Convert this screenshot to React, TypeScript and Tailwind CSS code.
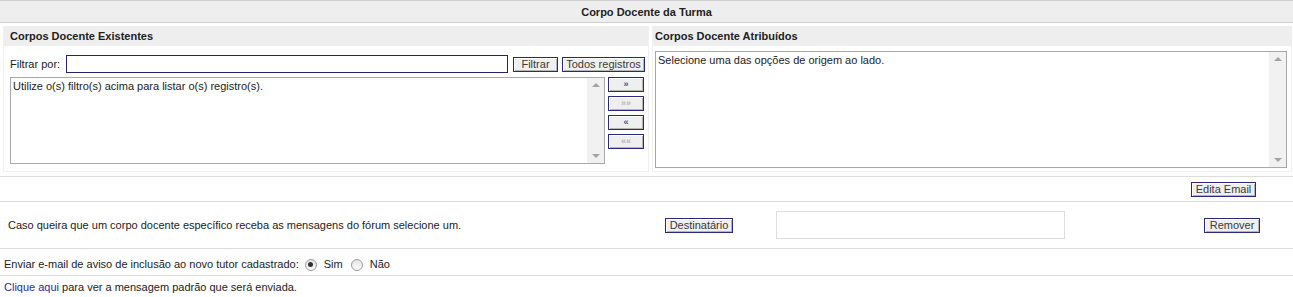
const btn =
  "h-[15px] flex items-center justify-center whitespace-nowrap bg-[#efefef] border border-[#2a2a7a] shadow-[inset_1px_1px_0_#fff,inset_-1px_-1px_0_#b5b5b5] text-[11px] leading-none text-[#3a3a3a] font-['Liberation_Sans',sans-serif]";

const moveButtons = [
  { label: "»", enabled: true },
  { label: "»»", enabled: false },
  { label: "«", enabled: true },
  { label: "««", enabled: false },
];

const ListBox = ({ text, className }: { text: string; className: string }) => (
  <div className={`flex border border-[#a8a8a8] bg-white ${className}`}>
    <div className="flex-1 px-[2px] pt-[1px] leading-[14px]">{text}</div>
    <div className="w-[17px] bg-[#f1f1f1] flex flex-col items-center justify-between py-[5px]">
      <span className="w-0 h-0 border-x-[4px] border-x-transparent border-b-[4px] border-b-[#a3a3a3]" />
      <span className="w-0 h-0 border-x-[4px] border-x-transparent border-t-[4px] border-t-[#a3a3a3]" />
    </div>
  </div>
);

const Radio = ({ checked }: { checked: boolean }) => (
  <span className="w-[12px] h-[12px] rounded-full border border-[#9a9a9a] bg-gradient-to-b from-[#e6e6e6] to-[#fafafa] flex items-center justify-center">
    {checked && <span className="w-[5px] h-[5px] rounded-full bg-[#333]" />}
  </span>
);

export default function App() {
  return (
    <div className="w-[1293px] h-[297px] bg-white text-[11px] text-[#222] font-['Liberation_Sans',sans-serif]">
      <div className="h-[23px] border-y border-[#d0d0d0] bg-[#eeeeee] flex items-center justify-center pt-[1px] font-bold">
        Corpo Docente da Turma
      </div>

      <div className="flex gap-[3px] pl-[3px] pr-[1px] pt-[3px]">
        {/* left panel */}
        <div className="w-[646px] h-[146px] border border-[#f0f0f0]">
          <div className="h-[19px] bg-[#eeeeee] flex items-center pl-[6px] font-bold">
            Corpos Docente Existentes
          </div>
          <div className="pl-[6px] pr-[3px] pt-[9px]">
            <div className="flex items-center h-[18px]">
              <span className="w-[56px]">Filtrar por:</span>
              <div className="w-[442px] h-[18px] border border-[#24246e] bg-white" />
              <button className={`${btn} ml-[5px] w-[45px]`}>Filtrar</button>
              <button className={`${btn} ml-[4px] w-[83px]`}>Todos registros</button>
            </div>
            <div className="flex mt-[4px]">
              <ListBox text="Utilize o(s) filtro(s) acima para listar o(s) registro(s)." className="w-[595px] h-[87px]" />
              <div className="ml-[3px] flex flex-col gap-[4px]">
                {moveButtons.map((b) => (
                  <button
                    key={b.label}
                    className={`${btn} w-[36px] !text-[9px] font-bold ${b.enabled ? "!text-[#2d5c9c]" : "!text-[#b8b8b8]"}`}
                  >
                    {b.label}
                  </button>
                ))}
              </div>
            </div>
          </div>
        </div>

        {/* right panel */}
        <div className="flex-1 h-[146px] border border-[#f0f0f0]">
          <div className="h-[19px] bg-[#eeeeee] flex items-center pl-[2px] font-bold">
            Corpos Docente Atribuídos
          </div>
          <div className="pl-[2px] pr-[4px] pt-[5px]">
            <ListBox text="Selecione uma das opções de origem ao lado." className="h-[117px]" />
          </div>
        </div>
      </div>

      <div className="mt-[4px] h-[26px] border-y border-[#dcdcdc] flex items-center justify-end pr-[37px]">
        <button className={`${btn} w-[65px]`}>Edita Email</button>
      </div>

      <div className="h-[47px] border-b border-[#dcdcdc] flex items-center">
        <span className="pl-[8px] w-[665px]">
          Caso queira que um corpo docente específico receba as mensagens do fórum selecione um.
        </span>
        <button className={`${btn} w-[68px]`}>Destinatário</button>
        <div className="ml-[43px] w-[289px] h-[28px] border border-[#dedede] bg-white" />
        <button className={`${btn} ml-[139px] w-[56px]`}>Remover</button>
      </div>

      <div className="h-[27px] border-b border-[#dcdcdc] flex items-center pl-[4px] pt-[5px]">
        <span>Enviar e-mail de aviso de inclusão ao novo tutor cadastrado:</span>
        <span className="ml-[6px]">
          <Radio checked />
        </span>
        <span className="ml-[7px]">Sim</span>
        <span className="ml-[8px]">
          <Radio checked={false} />
        </span>
        <span className="ml-[7px]">Não</span>
      </div>

      <div className="h-[20px] flex items-center pl-[4px] pt-[3px]">
        <span className="text-[#2b2b9a]">Clique aqui</span>
        <span>&nbsp;para ver a mensagem padrão que será enviada.</span>
      </div>
    </div>
  );
}
